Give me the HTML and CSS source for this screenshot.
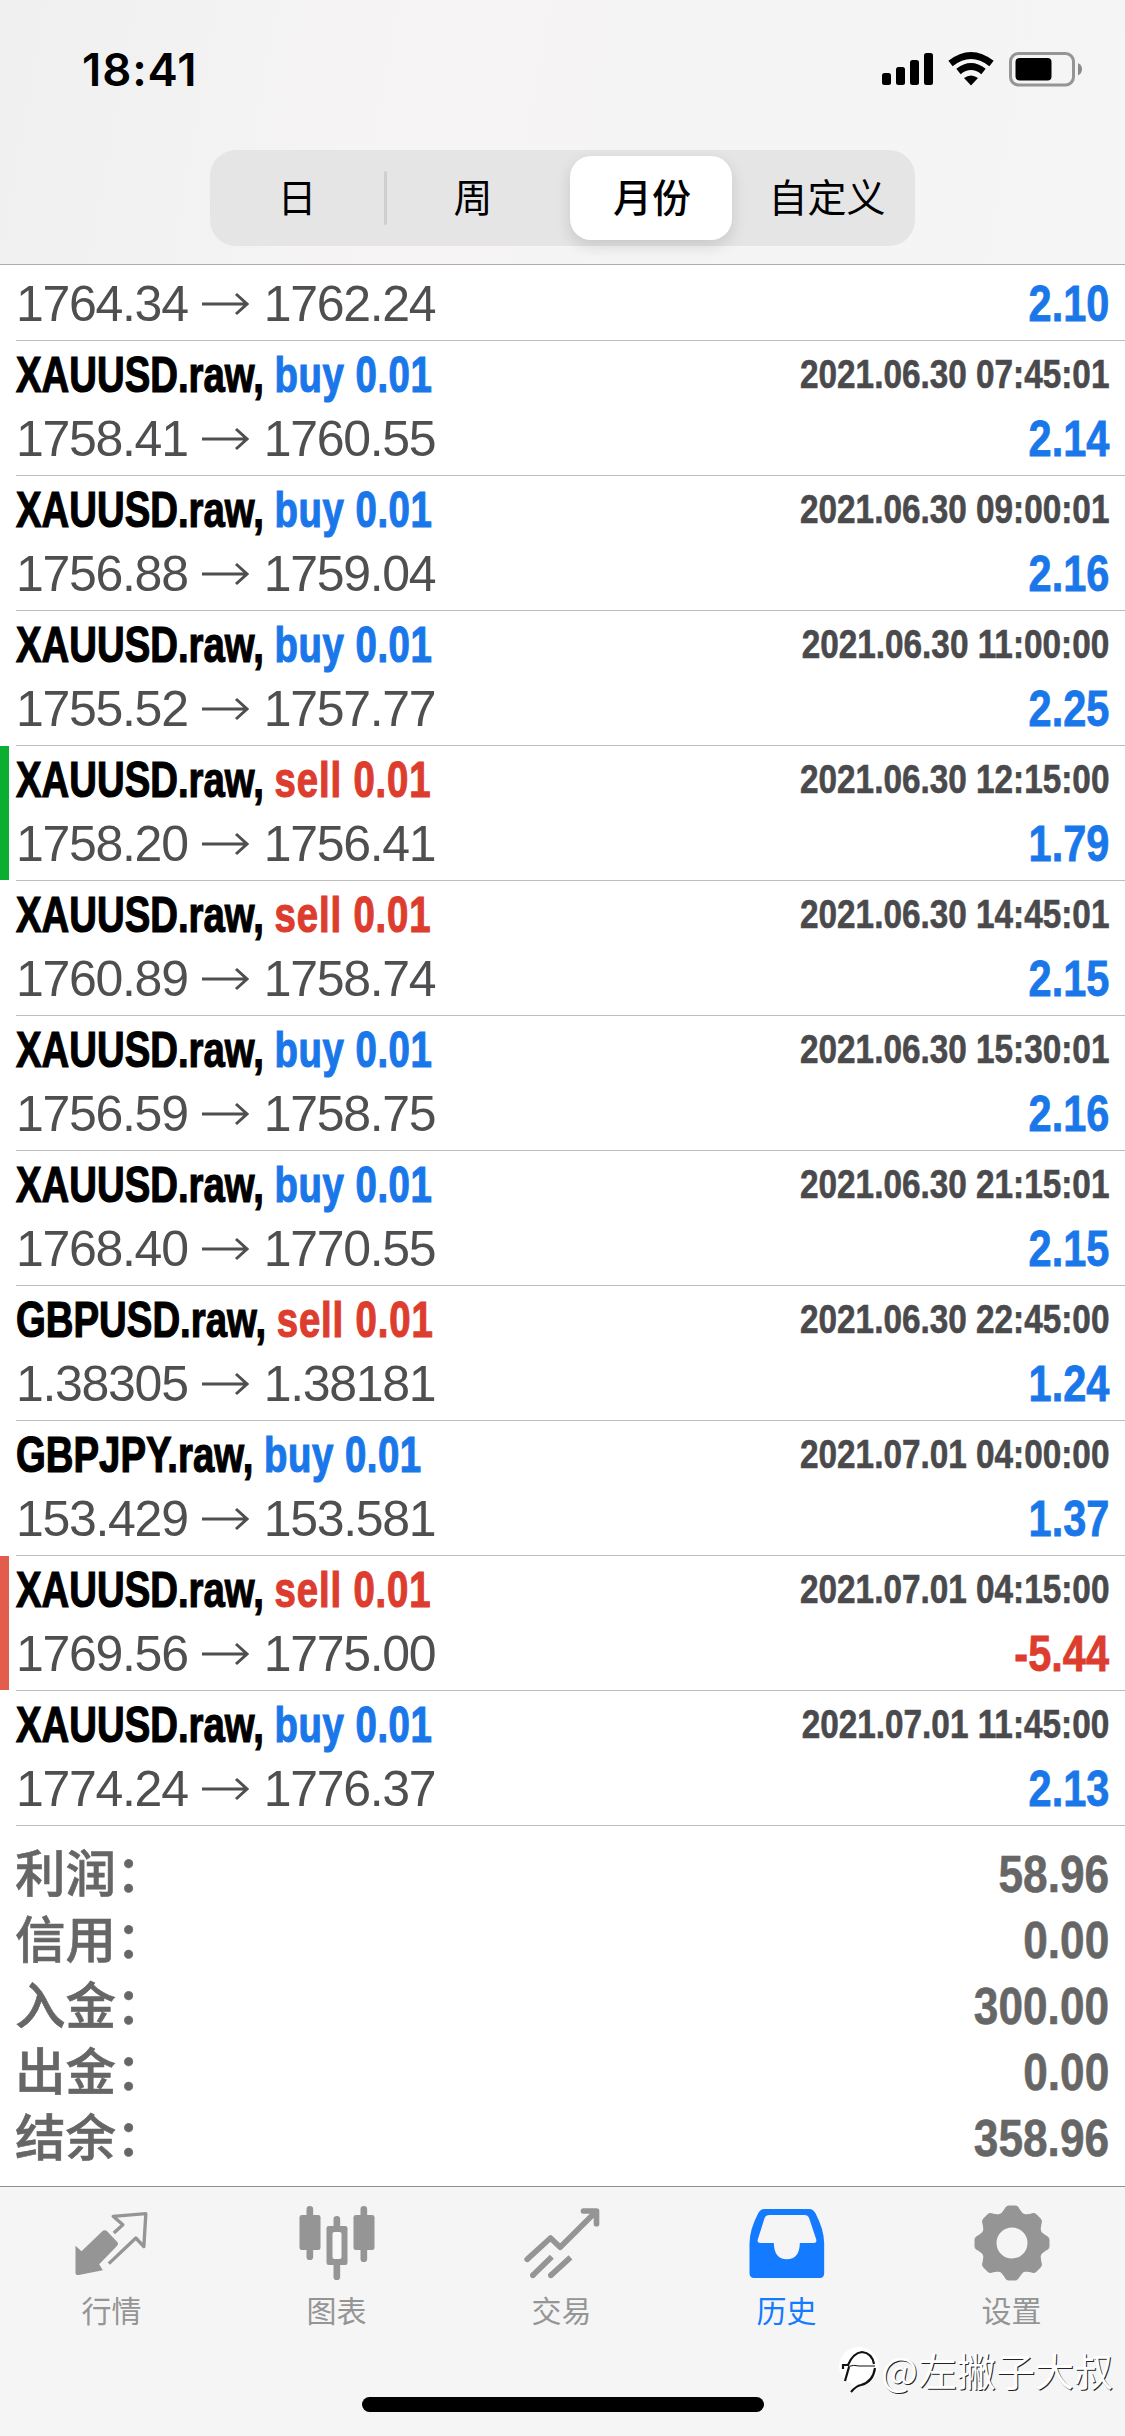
FILE: index.html
```
<!DOCTYPE html>
<html lang="zh-CN">
<head>
<meta charset="utf-8">
<title>历史</title>
<link rel="stylesheet" href="styles.css">
</head>
<body>
<svg class="defs" width="0" height="0">
  <symbol id="arrow" viewBox="0 0 48 24"><path d="M1 12H46M35 2L46 12L35 22" fill="none" stroke="#4f4f51" stroke-width="3"/></symbol>
</svg>
<div class="screen">
  <header class="header">
    <div class="status">
      <span class="time">18:41</span>
      <svg class="status-icons" width="204" height="36" viewBox="0 0 204 36">
        <rect x="1" y="22" width="9" height="12" rx="2.5"/><rect x="15" y="16" width="9" height="18" rx="2.5"/><rect x="29" y="9" width="9" height="25" rx="2.5"/><rect x="43" y="2" width="9" height="32" rx="2.5"/>
        <g fill="none" stroke="#000" stroke-width="7"><path d="M69.500 12.500Q90 -3.500 110.500 12.500"/><path d="M77.500 20.500Q90 10.500 102.500 20.500"/></g>
        <path d="M83 27Q90 22 97 27L90 34.500Z"/>
        <rect x="129.500" y="2.500" width="63" height="31.500" rx="8" fill="none" stroke="#959595" stroke-width="3"/>
        <rect x="134.500" y="7" width="36" height="22.500" rx="4"/>
        <path d="M197 12Q201 14 201 18Q201 22.500 197 24.500Z" fill="#8a8a8a"/>
      </svg>
    </div>
    <nav class="segments">
      <span class="segment first">日</span>
      <i class="divider"></i>
      <span class="segment">周</span>
      <span class="segment selected">月份</span>
      <span class="segment last">自定义</span>
    </nav>
  </header>
  <main class="list" id="list"></main>
  <section class="summary">
    <div class="total"><span>利润：</span><b>58.96</b></div>
    <div class="total"><span>信用：</span><b>0.00</b></div>
    <div class="total"><span>入金：</span><b>300.00</b></div>
    <div class="total"><span>出金：</span><b>0.00</b></div>
    <div class="total"><span>结余：</span><b>358.96</b></div>
  </section>
  <footer class="footer">
    <nav class="tabs">
      <a class="tab"><svg viewBox="37.5 39 240 240"><path fill="currentColor" d="M45 167L63 184L127 122Q134 118 140 124L171 157Q175 162 170 167L116 223L127 241L55 255Q45 256 45 248Z"/><path fill="none" stroke="currentColor" stroke-width="10" d="M160 129L187 104L158 79L256 71L250 170L226 144L145 221" stroke-linejoin="round"/></svg><span>行情</span></a>
      <a class="tab"><svg viewBox="712.5 39 240 240"><g stroke="currentColor" stroke-width="20" stroke-linecap="round"><path d="M748 58V200M910 58V206M829 88V260"/></g><g fill="currentColor"><rect x="717" y="75" width="63" height="105" rx="7"/><rect x="879" y="75" width="63" height="105" rx="7"/><rect x="798" y="108" width="63" height="117" rx="7"/></g><rect x="816" y="126" width="27" height="81" rx="6" fill="#f8f8f8"/></svg><span>图表</span></a>
      <a class="tab"><svg viewBox="37.5 39 240 240"><g fill="none" stroke="currentColor" stroke-width="17" stroke-linejoin="round"><path stroke-linecap="round" d="M50 208L120 144L149 172L256 65M219 63H258V101"/><path d="M67 256L124 200M121 256L180 202"/></g><g fill="currentColor"><circle cx="67" cy="256" r="8.500"/><circle cx="121" cy="256" r="8.500"/></g></svg><span>交易</span></a>
      <a class="tab active"><svg viewBox="712.5 39 240 240"><path fill="currentColor" fill-rule="evenodd" d="M762 57H896Q908 57 915 70Q941 120 941 160V250Q941 264 928 264H731Q717 264 717 250V160Q717 120 743 70Q750 57 762 57ZM777 75H882Q892 75 896 85L917 148Q920 159 909 159H868Q867 208 829 208Q791 208 790 159H750Q739 159 742 148L762 85Q766 75 777 75Z"/></svg><span>历史</span></a>
      <a class="tab"><svg viewBox="-39 -40 80 80"><circle r="23.500" fill="none" stroke="currentColor" stroke-width="16"/><g fill="currentColor" id="teeth"></g></svg><span>设置</span></a>
    </nav>
    <div class="home"></div>
    <div class="watermark">
      <svg width="44" height="50" viewBox="0 0 44 50"><ellipse cx="22" cy="22" rx="20" ry="19" fill="#fff"/><path d="M30 36L13 49L16 34Z" fill="#fff"/><g fill="none" stroke="#111"><path stroke-width="2.200" d="M8 37L12 23M6 25V21H11Q16 9 25 8Q35 9 37 20M38 24Q36 38 24 41Q19 42 14 48"/><path stroke-width="1" d="M11 22.500Q17 20.500 22 22H38"/></g></svg>
      <span>@左撇子大叔</span>
    </div>
  </footer>
</div>
<script src="app.js"></script>
</body>
</html>
```
FILE: app.js
```
const deals = [
  ['XAUUSD', 'buy', '2021.06.30 07:45:01', '1758.41', '1760.55', '2.14'],
  ['XAUUSD', 'buy', '2021.06.30 09:00:01', '1756.88', '1759.04', '2.16'],
  ['XAUUSD', 'buy', '2021.06.30 11:00:00', '1755.52', '1757.77', '2.25'],
  ['XAUUSD', 'sell', '2021.06.30 12:15:00', '1758.20', '1756.41', '1.79', 'tp'],
  ['XAUUSD', 'sell', '2021.06.30 14:45:01', '1760.89', '1758.74', '2.15'],
  ['XAUUSD', 'buy', '2021.06.30 15:30:01', '1756.59', '1758.75', '2.16'],
  ['XAUUSD', 'buy', '2021.06.30 21:15:01', '1768.40', '1770.55', '2.15'],
  ['GBPUSD', 'sell', '2021.06.30 22:45:00', '1.38305', '1.38181', '1.24'],
  ['GBPJPY', 'buy', '2021.07.01 04:00:00', '153.429', '153.581', '1.37'],
  ['XAUUSD', 'sell', '2021.07.01 04:15:00', '1769.56', '1775.00', '-5.44', 'sl'],
  ['XAUUSD', 'buy', '2021.07.01 11:45:00', '1774.24', '1776.37', '2.13'],
];

const prices = (from, to, profit) => `
  <div class="line prices">
    <span>${from}</span><svg class="arrow"><use href="#arrow"/></svg><span>${to}</span>
    <b class="profit ${profit[0] === '-' ? 'red' : 'blue'}">${profit}</b>
  </div>`;

const row = ([symbol, side, time, from, to, profit, mark = '']) => `
  <div class="row ${mark}"><div class="cell">
    <div class="line title">
      <b class="deal">${symbol}.raw, <span class="${side === 'buy' ? 'blue' : 'red'} ${side}">${side} 0.01</span></b>
      <b class="date">${time}</b>
    </div>${prices(from, to, profit)}
  </div></div>`;

document.getElementById('list').innerHTML =
  `<div class="row"><div class="cell partial">${prices('1764.34', '1762.24', '2.10')}</div></div>` +
  deals.map(row).join('');

document.getElementById('teeth').innerHTML = [0, 45, 90, 135, 180, 225, 270, 315]
  .map(a => `<path transform="rotate(${a})" d="M-12 -28L-7.500 -34Q-6 -37.500 -3 -37.500H3Q6 -37.500 7.500 -34L12 -28Z"/>`)
  .join('');
```
FILE: styles.css
```
* { box-sizing: border-box; }
body {
  margin: 0;
  background: #fff;
  font-family: "Liberation Sans", "Noto Sans CJK SC", sans-serif;
}
.defs { display: block; height: 0; }
.screen { width: 1125px; height: 2436px; overflow: hidden; display: flex; flex-direction: column; }

.header {
  height: 265px;
  flex: none;
  border-bottom: 1px solid #adadae;
  background: linear-gradient(100deg, #f0f0f1 0%, #f6f4f5 35%, #f5f5f6 100%);
}
.status { height: 150px; padding: 51px 40px 0 82px; display: flex; justify-content: space-between; align-items: flex-start; }
.time { font: 600 45.5px/38px Inter, sans-serif; letter-spacing: .9px; }
.status-icons { display: block; }
.segments {
  width: 705px;
  height: 96px;
  margin-left: 210px;
  padding: 6px;
  border-radius: 26px;
  background: #e5e5e6;
  display: flex;
  align-items: center;
}
.segment { width: 172px; height: 84px; font-size: 39px; line-height: 86px; text-align: center; }
.segment.first { width: 168px; padding-right: 6px; }
.divider { width: 3px; height: 54px; background: #cfcfd1; border-radius: 2px; }
.segment.selected {
  width: 162px;
  margin-left: 11px;
  padding-left: 2px;
  font-weight: 500;
  border-radius: 21px;
  background: #fff;
  box-shadow: 0 6px 16px rgba(0, 0, 0, .13);
}
.segment.last { flex: 1; padding-left: 13px; }

.list { flex: none; }
.row { padding-left: 16px; }
.row.tp { background: linear-gradient(#0aae30, #0aae30) 0 0 / 9px 134px no-repeat; }
.row.sl { background: linear-gradient(#e35d4d, #e35d4d) 0 0 / 9px 134px no-repeat; }
.cell { height: 135px; padding-right: 16px; border-bottom: 1px solid #bdbdc0; }
.cell.partial { height: 76px; padding-top: 9px; }
.line { display: flex; white-space: nowrap; font-size: 50px; }
.title { height: 68px; line-height: 69px; justify-content: space-between; }
.deal { transform: scaleX(.767); transform-origin: left; -webkit-text-stroke: 1.2px; }
.buy { letter-spacing: .7px; }
.sell { letter-spacing: 1.1px; }
.date { font-size: 40px; line-height: 67px; color: #4a4a4d; transform: scaleX(.833); transform-origin: right; -webkit-text-stroke: .6px; }
.prices { height: 60px; line-height: 60px; align-items: center; color: #4f4f51; letter-spacing: -1.3px; }
.arrow { width: 48px; height: 24px; margin: 0 14.5px 0 13.5px; }
.profit { margin-left: auto; letter-spacing: 0; transform: scaleX(.83); transform-origin: right; -webkit-text-stroke: .8px; }
.blue { color: #1a77ea; }
.red { color: #dd3d2e; }

.summary { flex: 1; padding: 16px 16px 0 15px; color: #666; }
.total { height: 66px; line-height: 65px; font-size: 50.5px; font-weight: 500; -webkit-text-stroke: .6px; display: flex; justify-content: space-between; }
.total b { font-size: 52px; transform: scaleX(.85); transform-origin: right; }

.footer { position: relative; flex: none; height: 250px; border-top: 1px solid #8f8f90; background: #f5f5f5; }
.tabs { display: grid; grid-template-columns: repeat(5, 1fr); height: 210px; padding-top: 16px; }
.tab { display: flex; flex-direction: column; align-items: center; color: #959595; font-size: 30px; line-height: 44px; }
.tab svg { width: 80px; height: 80px; margin-bottom: 7px; }
.tab span { padding-right: 2px; }
.tab.active { color: #147aff; }
.home { width: 402px; height: 15px; margin: 0 auto; border-radius: 8px; background: #000; }
.watermark {
  position: absolute;
  left: 837px;
  top: 154px;
  display: flex;
  align-items: center;
  font: 39px/56px "Noto Sans CJK SC", sans-serif;
  color: #fff;
  text-shadow: 1px 1px 0 #222;
}
```
